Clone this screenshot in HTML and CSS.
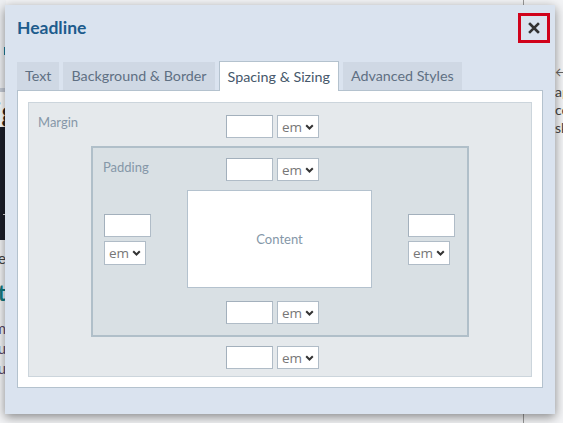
FILE: index.html
```html
<!DOCTYPE html>
<html>
<head>
<meta charset="utf-8">
<link rel="stylesheet" href="styles.css">
</head>
<body>
<div class="page">
  <div class="bg-left">
    <div class="bg-top"><span class="bg-mark"></span></div>
    <div class="bg-band"></div>
    <div class="bg-title">Design</div>
    <div class="bg-hero"><span class="bg-dash"></span></div>
    <div class="bg-line">more</div>
    <div class="bg-sub">Get</div>
    <div class="bg-line small">lorem</div>
    <div class="bg-line small">menu</div>
    <div class="bg-line small">menu</div>
  </div>
  <div class="bg-right">
    <div class="bg-arrow">&larr;</div>
    <div class="bg-text">ap</div>
    <div class="bg-text">co</div>
    <div class="bg-text">sk</div>
  </div>
</div>

<div class="dialog">
  <div class="dlg-head">
    <h2 class="dlg-title">Headline</h2>
    <button class="close" aria-label="Close">
      <svg width="12" height="12" viewBox="0 0 12 12"><path d="M2 2 L10 10 M10 2 L2 10" stroke="#333" stroke-width="2.6" stroke-linecap="square"/></svg>
    </button>
  </div>
  <div class="tabs">
    <div class="tab">Text</div>
    <div class="tab">Background &amp; Border</div>
    <div class="tab active">Spacing &amp; Sizing</div>
    <div class="tab">Advanced Styles</div>
  </div>
  <div class="panel">
    <div class="margin-box">
      <div class="row">
        <span class="box-label">Margin</span>
        <div class="ctrl shift"><span class="num"></span><span class="unit">em<svg class="chev" width="9" height="6" viewBox="0 0 9 6"><path d="M1.2 1.2 L4.5 4.5 L7.8 1.2" fill="none" stroke="#333" stroke-width="2"/></svg></span></div>
        <span></span>
      </div>
      <div class="padding-box">
        <div class="row">
          <span class="box-label">Padding</span>
          <div class="ctrl shift"><span class="num"></span><span class="unit">em<svg class="chev" width="9" height="6" viewBox="0 0 9 6"><path d="M1.2 1.2 L4.5 4.5 L7.8 1.2" fill="none" stroke="#333" stroke-width="2"/></svg></span></div>
          <span></span>
        </div>
        <div class="mid">
          <div class="side"><span class="num"></span><span class="unit">em<svg class="chev" width="9" height="6" viewBox="0 0 9 6"><path d="M1.2 1.2 L4.5 4.5 L7.8 1.2" fill="none" stroke="#333" stroke-width="2"/></svg></span></div>
          <div class="content">Content</div>
          <div class="side"><span class="num"></span><span class="unit">em<svg class="chev" width="9" height="6" viewBox="0 0 9 6"><path d="M1.2 1.2 L4.5 4.5 L7.8 1.2" fill="none" stroke="#333" stroke-width="2"/></svg></span></div>
        </div>
        <div class="row bottom">
          <span></span>
          <div class="ctrl shift"><span class="num"></span><span class="unit">em<svg class="chev" width="9" height="6" viewBox="0 0 9 6"><path d="M1.2 1.2 L4.5 4.5 L7.8 1.2" fill="none" stroke="#333" stroke-width="2"/></svg></span></div>
          <span></span>
        </div>
      </div>
      <div class="row bottom">
        <span></span>
        <div class="ctrl shift"><span class="num"></span><span class="unit">em<svg class="chev" width="9" height="6" viewBox="0 0 9 6"><path d="M1.2 1.2 L4.5 4.5 L7.8 1.2" fill="none" stroke="#333" stroke-width="2"/></svg></span></div>
        <span></span>
      </div>
    </div>
  </div>
</div>
</body>
</html>
```

FILE: styles.css
```css
* { box-sizing: border-box; }
html, body { margin: 0; padding: 0; }
body {
  width: 563px;
  height: 423px;
  overflow: hidden;
  position: relative;
  background: #f3f4f6;
  font-family: Lato, "Open Sans", sans-serif;
}

/* background page */
.page {
  display: flex;
  justify-content: space-between;
  height: 423px;
}
.bg-left {
  width: 6px;
  overflow: hidden;
  display: flex;
  flex-direction: column;
  align-items: flex-end;
}
.bg-left > div { width: 60px; text-align: right; flex-shrink: 0; }
.bg-top { height: 88px; background: #eef0f3; position: relative; }
.bg-mark { display: block; position: absolute; right: 0; top: 47px; width: 2px; height: 8px; background: #1f7f9a; }
.bg-band { height: 4px; background: #c5cbd6; }
.bg-title { height: 35px; font-size: 28px; line-height: 38px; font-weight: 700; color: #2a241f; background: #fff; }
.bg-hero { height: 113px; background: #1b1f2b; position: relative; }
.bg-dash { position: absolute; right: 0; top: 87px; width: 3px; height: 1px; background: #ddd; }
.bg-line { font-size: 15px; line-height: 20px; color: #444; margin-top: 8px; }
.bg-line.small { margin-top: 0; color: #5a4a6a; }
.bg-sub { font-size: 22px; line-height: 26px; font-weight: 700; color: #137a80; margin: 12px 0 12px; }

.bg-right {
  width: 40px;
  border-left: 1px solid #999;
  padding: 63px 0 0 31px;
  background: #f3f4f6;
  overflow: hidden;
}
.bg-arrow, .bg-text { font-size: 14px; line-height: 18px; color: #444; white-space: nowrap; }
.bg-arrow { color: #666; margin-bottom: 2px; }

/* dialog */
.dialog {
  position: absolute;
  left: 5px;
  top: 5px;
  width: 550px;
  height: 409px;
  background: #dae3ef;
  box-shadow: 0 3px 10px rgba(0, 0, 0, 0.45);
  padding: 0 12px 0 12px;
}
.dlg-head {
  display: flex;
  justify-content: space-between;
  align-items: flex-start;
  height: 57px;
}
.dlg-title {
  margin: 12px 0 0 0;
  font-size: 17.5px;
  line-height: 22px;
  font-weight: 700;
  color: #1d5c8d;
}
.close {
  margin: 8px -7px 0 0;
  width: 32px;
  height: 30px;
  border: 3px solid #d0021b;
  background: transparent;
  padding: 0;
  display: flex;
  align-items: center;
  justify-content: center;
  cursor: pointer;
}

.tabs {
  display: flex;
  gap: 4px;
  height: 28px;
  position: relative;
  z-index: 1;
}
.tab {
  background: #cfd8e4;
  color: #5f7083;
  font-size: 14.3px;
  line-height: 28px;
  padding: 0 8px;
  white-space: nowrap;
}
.tab.active {
  background: #fff;
  color: #46586b;
  border: 1px solid #b4c2ce;
  border-bottom: none;
  margin-top: -1px;
  height: 30px;
  line-height: 29px;
  padding: 0 8px;
}

.panel {
  background: #fff;
  border: 1px solid #b4c2ce;
  height: 298px;
  padding: 11px 10px 10px 10px;
}

.margin-box {
  background: #e5e9ec;
  border: 1px solid #ccd5dc;
  height: 275px;
  padding: 12px 0 7px 0;
  display: flex;
  flex-direction: column;
  align-items: stretch;
}
.row {
  display: grid;
  grid-template-columns: 1fr auto 1fr;
  align-items: start;
}
.box-label {
  font-size: 13px;
  line-height: 16px;
  color: #8597a8;
  padding-left: 9px;
}
.margin-box > .row:first-child .box-label { margin-top: -1px; }
.margin-box > .row.bottom { margin-top: 9px; }

.ctrl {
  display: flex;
  gap: 4px;
}
.shift { margin-right: 15px; }

.num {
  display: block;
  width: 47px;
  height: 23px;
  background: #fff;
  border: 1px solid #b0bcc7;
  border-top-color: #a3b0bc;
  border-left-color: #a3b0bc;
}
.unit {
  display: flex;
  align-items: center;
  justify-content: space-between;
  width: 42px;
  height: 23px;
  background: #fff;
  border: 1px solid #b0bcc7;
  padding: 0 4px 0 4px;
  font-size: 13.5px;
  color: #777;
  font-family: "Open Sans", Lato, sans-serif;
}
.chev { display: block; margin-top: 1px; }

.padding-box {
  margin: 8px 62px 0 62px;
  background: #d9e0e4;
  border: 2px solid #b0bfc9;
  height: 193px;
  padding: 10px 0 0 0;
}
.padding-box > .row .box-label { padding-left: 10px; margin-top: 1px; }
.padding-box > .row.bottom { margin-top: 13px; }

.mid {
  display: flex;
  align-items: center;
  margin-top: 9px;
  padding: 0 12px 0 11px;
  justify-content: space-between;
}
.side {
  display: flex;
  flex-direction: column;
  gap: 4px;
  width: 47px;
}
.side .num { height: 23px; }
.side .unit { height: 24px; }
.content {
  width: 185px;
  height: 98px;
  background: #fff;
  border: 1px solid #b4c2ce;
  display: flex;
  align-items: center;
  justify-content: center;
  font-size: 13px;
  color: #8597a8;
}
```
